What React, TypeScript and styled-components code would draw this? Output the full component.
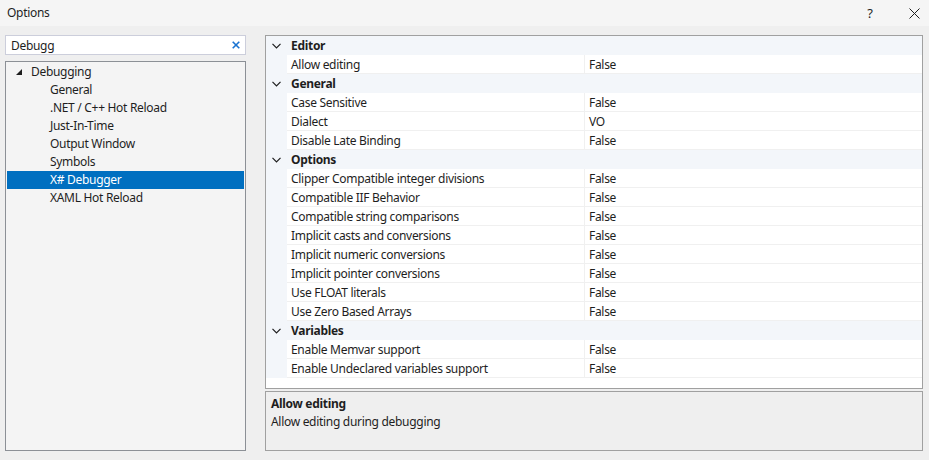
import React from 'react';
import styled, { createGlobalStyle } from 'styled-components';

const GlobalStyle = createGlobalStyle`
  html, body {
    margin: 0;
    padding: 0;
    background: #efefef;
  }
  body {
    font-family: "Segoe UI", "Noto Sans", sans-serif;
    font-size: 12px;
    letter-spacing: -0.3px;
    color: #1e1e1e;
  }
`;

const Window = styled.div`
  width: 929px;
  height: 460px;
  display: flex;
  flex-direction: column;
  background: #efefef;
  overflow: hidden;
`;

const TitleBar = styled.div`
  height: 26px;
  display: flex;
  align-items: center;
  gap: 14px;
  padding-left: 7px;
  background: #f5f5f5;
`;

const Title = styled.div`
  flex: 1;
  margin-top: -2px;
`;

const TitleButton = styled.div`
  width: 30px;
  height: 26px;
  display: flex;
  align-items: center;
  justify-content: center;
  font-size: 13px;
`;

const Body = styled.div`
  flex: 1;
  display: flex;
  gap: 19px;
  padding: 9px 6px 9px 5px;
`;

const LeftColumn = styled.div`
  width: 241px;
  display: flex;
  flex-direction: column;
  gap: 6px;
`;

const SearchBox = styled.div`
  height: 20px;
  box-sizing: border-box;
  border: 1px solid #cccedb;
  background: #fff;
  display: flex;
  align-items: center;
  padding: 0 5px;
`;

const SearchText = styled.div`
  flex: 1;
`;

const Tree = styled.div`
  flex: 1;
  border: 1px solid #8c9096;
  background: #f4f4f4;
  padding-top: 1px;
`;

const TreeRow = styled.div<{ $level: number; $selected?: boolean }>`
  height: 18px;
  margin: 0 1px;
  display: flex;
  align-items: center;
  padding-bottom: 1px;
  box-sizing: border-box;
  padding-left: ${p => (p.$level === 0 ? 9 : 43)}px;
  background: ${p => (p.$selected ? '#006fc0' : 'transparent')};
  color: ${p => (p.$selected ? '#fff' : '#1e1e1e')};
`;

const Expander = styled.svg`
  width: 6px;
  height: 6px;
  margin-right: 9px;
`;

const RightColumn = styled.div`
  flex: 1;
  display: flex;
  flex-direction: column;
  gap: 2px;
`;

const Grid = styled.div`
  height: 354px;
  box-sizing: border-box;
  border: 1px solid #a0a0a0;
  background: #fff;
`;

const Row = styled.div<{ $category?: boolean }>`
  height: 19px;
  display: flex;
  background: ${p => (p.$category ? '#f3f6fa' : '#fff')};
`;

const Gutter = styled.div`
  width: 21px;
  background: #f3f6fa;
  display: flex;
  align-items: center;
  justify-content: center;
`;

const Cell = styled.div<{ $width?: number; $divider?: boolean }>`
  ${p => (p.$width ? `width: ${p.$width}px;` : 'flex: 1;')}
  box-sizing: border-box;
  padding-left: 4px;
  display: flex;
  align-items: center;
  border-bottom: 1px solid #f0f0f0;
  ${p => (p.$divider ? 'border-right: 1px solid #f0f0f0;' : '')}
  white-space: nowrap;
`;

const CategoryCell = styled.div`
  flex: 1;
  padding-left: 4px;
  display: flex;
  align-items: center;
  font-weight: 700;
`;

const Description = styled.div`
  flex: 1;
  border: 1px solid #a0a0a0;
  background: #efefef;
  padding: 3px 5px;
`;

const DescTitle = styled.div`
  font-weight: 700;
  line-height: 18px;
`;

const DescText = styled.div`
  line-height: 18px;
`;

const Chevron = () => (
  <svg width="9" height="6" viewBox="0 0 9 6">
    <path d="M0.5 0.8 L4.5 4.8 L8.5 0.8" fill="none" stroke="#1e1e1e" strokeWidth="1.2" />
  </svg>
);

const treeItems = [
  'General',
  '.NET / C++ Hot Reload',
  'Just-In-Time',
  'Output Window',
  'Symbols',
  'X# Debugger',
  'XAML Hot Reload',
];

const categories: { name: string; props: [string, string][] }[] = [
  { name: 'Editor', props: [['Allow editing', 'False']] },
  {
    name: 'General',
    props: [
      ['Case Sensitive', 'False'],
      ['Dialect', 'VO'],
      ['Disable Late Binding', 'False'],
    ],
  },
  {
    name: 'Options',
    props: [
      ['Clipper Compatible integer divisions', 'False'],
      ['Compatible IIF Behavior', 'False'],
      ['Compatible string comparisons', 'False'],
      ['Implicit casts and conversions', 'False'],
      ['Implicit numeric conversions', 'False'],
      ['Implicit pointer conversions', 'False'],
      ['Use FLOAT literals', 'False'],
      ['Use Zero Based Arrays', 'False'],
    ],
  },
  {
    name: 'Variables',
    props: [
      ['Enable Memvar support', 'False'],
      ['Enable Undeclared variables support', 'False'],
    ],
  },
];

const App = () => (
  <Window>
    <GlobalStyle />
    <TitleBar>
      <Title>Options</Title>
      <TitleButton>?</TitleButton>
      <TitleButton>
        <svg width="11" height="11" viewBox="0 0 11 11">
          <path d="M0.5 0.5 L10.5 10.5 M10.5 0.5 L0.5 10.5" stroke="#1e1e1e" strokeWidth="1" />
        </svg>
      </TitleButton>
    </TitleBar>
    <Body>
      <LeftColumn>
        <SearchBox>
          <SearchText>Debugg</SearchText>
          <svg width="8" height="8" viewBox="0 0 8 8">
            <path d="M0.7 0.7 L7.3 7.3 M7.3 0.7 L0.7 7.3" stroke="#1a73d1" strokeWidth="1.6" />
          </svg>
        </SearchBox>
        <Tree>
          <TreeRow $level={0}>
            <Expander viewBox="0 0 6 6">
              <polygon points="6,0 6,6 0,6" fill="#1e1e1e" />
            </Expander>
            Debugging
          </TreeRow>
          {treeItems.map(item => (
            <TreeRow key={item} $level={1} $selected={item === 'X# Debugger'}>
              {item}
            </TreeRow>
          ))}
        </Tree>
      </LeftColumn>
      <RightColumn>
        <Grid>
          {categories.map(cat => (
            <React.Fragment key={cat.name}>
              <Row $category>
                <Gutter>
                  <Chevron />
                </Gutter>
                <CategoryCell>{cat.name}</CategoryCell>
              </Row>
              {cat.props.map(([name, value]) => (
                <Row key={name}>
                  <Gutter />
                  <Cell $width={298} $divider>
                    {name}
                  </Cell>
                  <Cell>{value}</Cell>
                </Row>
              ))}
            </React.Fragment>
          ))}
        </Grid>
        <Description>
          <DescTitle>Allow editing</DescTitle>
          <DescText>Allow editing during debugging</DescText>
        </Description>
      </RightColumn>
    </Body>
  </Window>
);

export default App;
